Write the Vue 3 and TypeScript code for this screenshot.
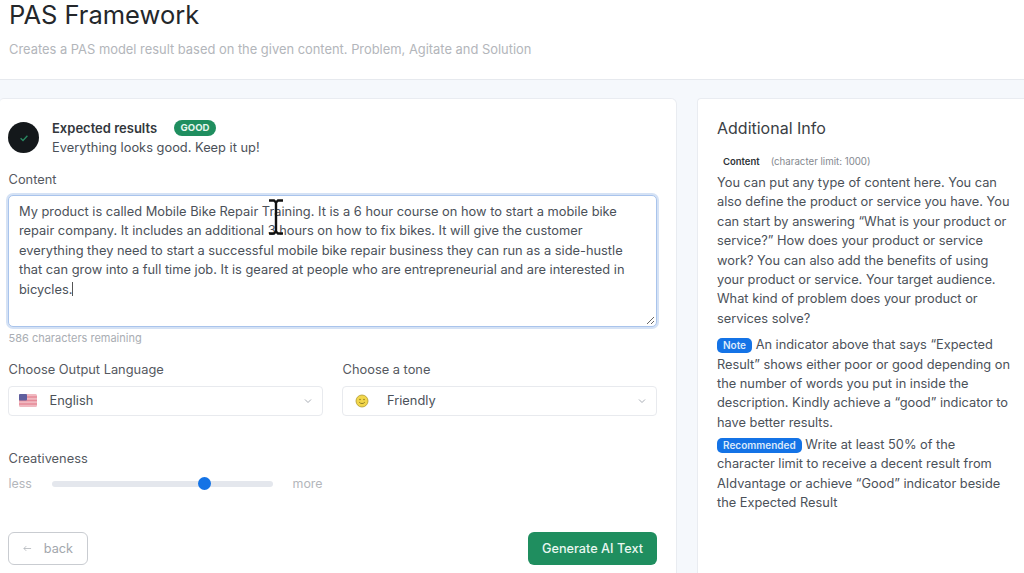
<script setup lang="ts">
import { ref } from "vue";

const content = ref(
    "My product is called Mobile Bike Repair Training. It is a 6 hour course on how to start a mobile bike repair company. It includes an additional 3 hours on how to fix bikes. It will give the customer everything they need to start a successful mobile bike repair business they can run as a side-hustle that can grow into a full time job. It is geared at people who are entrepreneurial and are interested in bicycles."
);
const creativeness = ref(69);
</script>

<template>
    <div class="page">
        <header class="page-head">
            <h1>PAS Framework</h1>
            <p>Creates a PAS model result based on the given content. Problem, Agitate and Solution</p>
        </header>

        <main class="columns">
            <section class="card form-card">
                <div class="status">
                    <div class="status-icon">
                        <svg width="12" height="12" viewBox="0 0 12 12" fill="none">
                            <path d="M2.6 6.2 5 8.5l4.4-4.8" stroke="#2a8a63" stroke-width="1.3" />
                        </svg>
                    </div>
                    <div class="status-body">
                        <div class="status-title">
                            <strong>Expected results</strong>
                            <span class="good">GOOD</span>
                        </div>
                        <div class="status-text">Everything looks good. Keep it up!</div>
                    </div>
                </div>

                <label class="field-label">Content</label>
                <div class="textarea">
                    {{ content }}<span class="caret"></span>
                    <svg class="resizer" width="9" height="9" viewBox="0 0 9 9" fill="none">
                        <path d="M1 8 8 1M5 8l3-3" stroke="#666" stroke-width="1" />
                    </svg>
                    <svg class="ibeam" width="18" height="36" viewBox="0 0 18 36" fill="none">
                        <path d="M2 1.5h5l2 2 2-2h5M9 3.5v29M2 34.500h5l2-2 2 2h5" stroke="#111" stroke-width="2.4" />
                    </svg>
                </div>
                <div class="remaining">586 characters remaining</div>

                <div class="selects">
                    <div class="select-field">
                        <label class="field-label">Choose Output Language</label>
                        <div class="select">
                            <svg class="flag" width="18" height="13" viewBox="0 0 18 13">
                                <rect width="18" height="13" rx="1.500" fill="#f0b8c0" />
                                <path d="M0 3h18M0 6.500h18M0 10h18" stroke="#e58a98" stroke-width="1.500" />
                                <rect width="8" height="6.500" rx="1" fill="#5f5f9e" />
                            </svg>
                            <span class="select-value">English</span>
                            <svg class="chevron" width="8" height="6" viewBox="0 0 8 6" fill="none">
                                <path d="m1 1.500 3 3 3-3" stroke="#a8adb5" stroke-width="1" />
                            </svg>
                        </div>
                    </div>
                    <div class="select-field">
                        <label class="field-label">Choose a tone</label>
                        <div class="select">
                            <svg class="smiley" width="14" height="14" viewBox="0 0 14 14" fill="none">
                                <circle cx="7" cy="7" r="6" fill="#f2d64b" stroke="#b09a2e" stroke-width="0.800" />
                                <circle cx="5" cy="5.500" r="0.700" fill="#7a6a1e" />
                                <circle cx="9" cy="5.500" r="0.700" fill="#7a6a1e" />
                                <path d="M4.200 8.200c1.400 1.800 4.200 1.800 5.600 0" stroke="#7a6a1e" stroke-width="0.800" />
                            </svg>
                            <span class="select-value">Friendly</span>
                            <svg class="chevron" width="8" height="6" viewBox="0 0 8 6" fill="none">
                                <path d="m1 1.500 3 3 3-3" stroke="#a8adb5" stroke-width="1" />
                            </svg>
                        </div>
                    </div>
                </div>

                <div class="creativeness">
                    <label class="field-label">Creativeness</label>
                    <div class="slider-row">
                        <span>less</span>
                        <div class="track">
                            <div class="thumb" :style="{ left: creativeness + '%' }"></div>
                        </div>
                        <span>more</span>
                    </div>
                </div>

                <div class="actions">
                    <button type="button" class="back">
                        <svg width="13" height="9" viewBox="0 0 13 9" fill="none">
                            <path d="M12 4.500H1.500M4.800 1 1.300 4.500 4.800 8" stroke="#a3a7ad" stroke-width="1" />
                        </svg>
                        back
                    </button>
                    <button type="button" class="generate">Generate AI Text</button>
                </div>
            </section>

            <aside class="card info-card">
                <h2>Additional Info</h2>
                <div class="info-head">
                    <strong>Content</strong>
                    <small>(character limit: 1000)</small>
                </div>
                <p>
                    You can put any type of content here. You can also define the product or service you have. You can
                    start by answering “What is your product or service?” How does your product or service work? You can
                    also add the benefits of using your product or service. Your target audience. What kind of problem
                    does your product or services solve?
                </p>
                <p class="note">
                    <span class="tag">Note</span> An indicator above that says “Expected Result” shows either poor or
                    good depending on the number of words you put in inside the description. Kindly achieve a “good”
                    indicator to have better results.
                </p>
                <p class="recommended">
                    <span class="tag">Recommended</span> Write at least 50% of the character limit to receive a decent
                    result from AIdvantage or achieve “Good” indicator beside the Expected Result
                </p>
            </aside>
        </main>
    </div>
</template>

<style>
html,
body {
    margin: 0;
    background: #f5f8fc;
}
</style>

<style scoped>
.page {
    width: 1024px;
    height: 573px;
    overflow: hidden;
    background: #f5f8fc;
    font-family: Inter, "Liberation Sans", sans-serif;
    color: #4b5159;
}

.page-head {
    height: 80px;
    box-sizing: border-box;
    padding: 0 9px;
    background: #fff;
    border-bottom: 1px solid #e6e9ee;
}

.page-head h1 {
    margin: 0;
    font-size: 25.5px;
    line-height: 29px;
    font-weight: 400;
    color: #24272b;
}

.page-head p {
    margin: 12px 0 0;
    font-size: 12.9px;
    line-height: 18px;
    color: #b3b6bb;
}

.columns {
    display: flex;
    gap: 20px;
    padding-top: 18px;
}

.card {
    flex: none;
    background: #fff;
    border: 1px solid #e9ecf1;
    border-radius: 4px 6px 0 0;
    box-sizing: border-box;
    height: 480px;
}

.form-card {
    width: 677px;
    padding: 19px 19px 0 8px;
    border-left: 0;
}

.status {
    display: flex;
    align-items: flex-start;
    gap: 13px;
}

.status-icon {
    width: 31px;
    height: 31px;
    margin-top: 4px;
    border-radius: 50%;
    background: #14181b;
    display: grid;
    place-items: center;
}

.status-body {
    padding-top: 1.5px;
}

.status-title {
    display: flex;
    align-items: center;
    gap: 17px;
    height: 17px;
}

.status-title strong {
    font-size: 13px;
    font-weight: 600;
    color: #33373c;
}

.good {
    background: #1f8e5f;
    color: #e6f6ee;
    font-size: 9.6px;
    font-weight: 700;
    line-height: 16px;
    padding: 0 6.5px;
    border-radius: 8px;
}

.status-text {
    margin-top: 1px;
    font-size: 12.85px;
    line-height: 20px;
    color: #4b5159;
}

.field-label {
    display: block;
    padding-left: 0.5px;
    font-size: 12.85px;
    line-height: 18px;
    color: #55595f;
}

.form-card > .field-label {
    margin-top: 13.5px;
}

.textarea {
    position: relative;
    margin-top: 6px;
    height: 132px;
    box-sizing: border-box;
    padding: 6px 10px;
    border: 1px solid #a9c4ec;
    box-shadow: 0 0 0 2px #d5e2f5;
    border-radius: 5px;
    font-size: 12.85px;
    line-height: 19.4px;
    color: #4b5159;
    background: #fff;
}

.caret {
    display: inline-block;
    width: 1px;
    height: 14px;
    background: #555;
    vertical-align: -2px;
}

.resizer {
    position: absolute;
    right: 1px;
    bottom: 1px;
}

.ibeam {
    position: absolute;
    left: 258px;
    top: 3px;
}

.remaining {
    margin-top: 4px;
    padding-left: 0.5px;
    font-size: 11px;
    line-height: 14px;
    color: #a9adb3;
}

.selects {
    display: flex;
    gap: 19px;
    margin-top: 16px;
}

.select-field {
    flex: 1;
}

.select {
    display: flex;
    align-items: center;
    height: 30px;
    margin-top: 6.5px;
    padding: 0 10px;
    box-sizing: border-box;
    border: 1px solid #e8eaee;
    border-radius: 4px;
    font-size: 12.85px;
    color: #4b5159;
}

.flag {
    margin-right: 12.5px;
}

.smiley {
    margin: 0 18px 0 2px;
}

.select-value {
    flex: 1;
}

.creativeness {
    margin-top: 34.5px;
}

.slider-row {
    display: flex;
    align-items: center;
    justify-content: space-between;
    width: 314.5px;
    margin-top: 6.5px;
    padding-left: 0.5px;
    box-sizing: border-box;
    height: 18px;
    font-size: 12.4px;
    color: #b3b6bb;
}

.track {
    position: relative;
    width: 221px;
    height: 6px;
    border-radius: 3px;
    background: #e4e7ed;
}

.thumb {
    position: absolute;
    top: 50%;
    width: 13px;
    height: 13px;
    margin: -6.5px 0 0 -6.5px;
    border-radius: 50%;
    background: #1473e6;
}

.actions {
    display: flex;
    justify-content: space-between;
    margin-top: 39px;
}

.actions button {
    height: 33px;
    border-radius: 6px;
    font-family: inherit;
    font-size: 12.7px;
    cursor: pointer;
}

.back {
    display: flex;
    align-items: center;
    gap: 12px;
    width: 80px;
    padding: 0 14px;
    background: #fff;
    border: 1px solid #c9ccd1;
    color: #a3a7ad;
}

.generate {
    width: 129px;
    padding: 0;
    border: none;
    background: #1f8e5f;
    color: #e9f7f0;
    font-weight: 500;
}

.info-card {
    width: 340px;
    padding: 19px 25px 0 19px;
    border-right: 0;
}

.info-card h2 {
    margin: 0;
    font-size: 16px;
    line-height: 20px;
    font-weight: 400;
    color: #3a3e44;
}

.info-head {
    display: flex;
    align-items: baseline;
    gap: 11px;
    margin-top: 17px;
    padding-left: 6px;
    line-height: 14px;
}

.info-head strong {
    font-size: 9.5px;
    font-weight: 600;
    color: #2f3338;
}

.info-head small {
    font-size: 9.7px;
    color: #85898f;
}

.info-card p {
    margin: 0;
    font-size: 12.8px;
    line-height: 19.4px;
    color: #4b5159;
}

.info-head + p {
    margin-top: 4px;
}

.info-card p.note {
    margin-top: 7px;
}

.info-card p.recommended {
    margin-top: 2.5px;
}

.tag {
    display: inline-block;
    background: #1473e6;
    color: #dbe9fb;
    font-size: 10px;
    font-weight: 600;
    line-height: 15px;
    padding: 0 6px;
    border-radius: 5px;
    vertical-align: 0;
}
</style>
